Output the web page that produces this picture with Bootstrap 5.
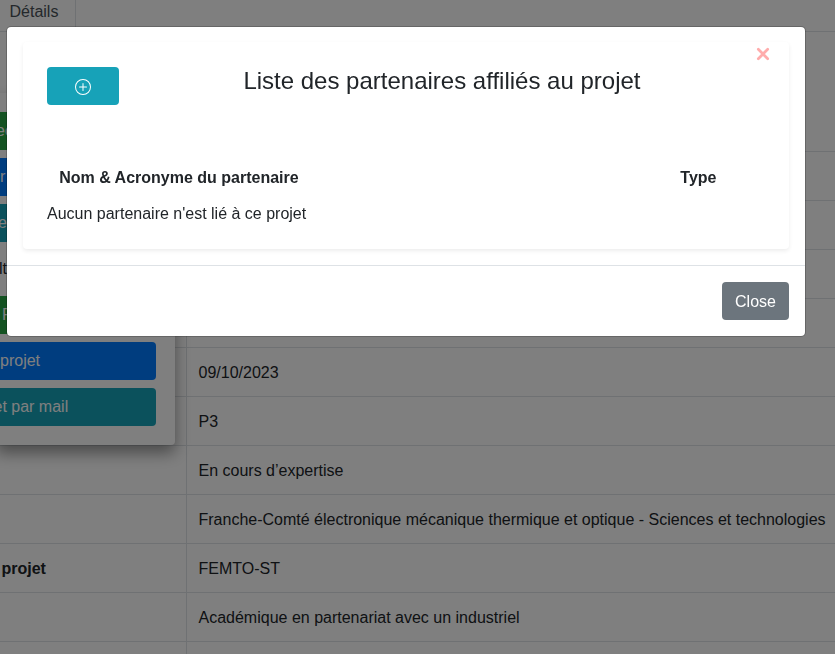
<!DOCTYPE html>
<html lang="fr">
<head>
<meta charset="utf-8">
<meta name="viewport" content="width=device-width, initial-scale=1">
<title>Partenaires du projet</title>
<link href="https://cdn.jsdelivr.net/npm/bootstrap@5.3.0/dist/css/bootstrap.min.css" rel="stylesheet">
<style>
body{font-family:"Liberation Sans",Arial,sans-serif;height:654px;overflow:hidden;--bs-body-line-height:1.5}
main{height:654px;overflow:hidden}
.tabs{height:31px}
.tab-details{width:76px;height:31px;padding:0 0 0 9.5px;border-right:1px solid #dee2e6;color:#495057;line-height:23px}
.project-table{display:grid;grid-template-columns:186px 1fr;grid-template-rows:120px repeat(10,49px) 13px}
.project-table>div{border-top:1px solid #dee2e6;padding:13px 0 0 12px;white-space:nowrap}
.project-table>div:nth-child(even){border-left:1px solid #dee2e6;padding-left:11.5px}
.project-table>div:nth-last-child(-n+2){padding-top:0}
.project-table>.cell-label{padding-left:1.5px}
.action-menu{left:-4px;top:93px;width:179px;height:352px;padding:19px 19px 19px 0;box-shadow:0 8px 16px rgba(0,0,0,.42);border-radius:4px}
.action-menu .btn{height:38px;padding:6px 0;border-radius:0 4px 4px 0;border:1px solid transparent;line-height:24px}
.bg-a{background:#28a745;color:#fff}.bg-b{background:#007bff;color:#fff}.bg-c,.bg-c:hover{background:#17a2b8;color:#fff}.bg-d{background:#fff;color:#212529}
.in-0{text-indent:-3.5px}.in-1{text-indent:-1px}.in-2{text-indent:1px}.in-3{text-indent:2px}.in-4{text-indent:3px}.in-5{text-indent:5px}
.shade{background:rgba(0,0,0,.5)}
.modal-dialog{width:800px;max-width:800px;margin:26px 0 0 6px}
.modal-content{border:1px solid rgba(0,0,0,.2);border-radius:5px}
.modal-body{padding:15px 16px 16px 16px}
.partners{height:207px;border:0;border-radius:4px;padding:25px 24px 0;box-shadow:0 2px 4px rgba(0,0,0,.075)}
.add-btn{width:72px;height:38px;padding:1px 0 0;border:0;border-radius:4px}
.heading{font-size:24px;line-height:28.8px;font-weight:400;margin-left:124.4px}
.dismiss{right:19px;top:5px;line-height:0}
.partner-head{margin-top:61px;height:24px}
.partner-name{padding-left:12.2px}
.partner-type{margin-right:48.5px}
.modal-footer{padding:16px;border-top:1px solid #dee2e6}
.close-btn{background:#6c757d;color:#fff;border-radius:4px;height:38px;width:67px;padding:2px 0 0}
</style>
<script src="https://cdn.jsdelivr.net/npm/bootstrap@5.3.0/dist/js/bootstrap.bundle.min.js"></script>
</head>
<body>
<main>
  <div class="tabs d-flex"><div class="tab-details">Détails</div></div>
  <div class="project-table">
    <div></div><div></div>
    <div></div><div></div>
    <div></div><div></div>
    <div></div><div></div>
    <div></div><div></div>
    <div></div><div>09/10/2023</div>
    <div></div><div>P3</div>
    <div></div><div>En cours d’expertise</div>
    <div></div><div>Franche-Comté électronique mécanique thermique et optique - Sciences et technologies</div>
    <div class="cell-label fw-bold">projet</div><div>FEMTO-ST</div>
    <div></div><div>Académique en partenariat avec un industriel</div>
    <div></div><div></div>
  </div>
  <div class="action-menu position-absolute bg-white d-flex flex-column gap-2">
    <div class="btn bg-a text-start in-1">ec</div>
    <div class="btn bg-b text-start in-4">r</div>
    <div class="btn bg-c text-start in-2">e</div>
    <div class="btn bg-d text-start in-3">lt</div>
    <div class="btn bg-a text-start in-5">F</div>
    <div class="btn bg-b text-start in-4">projet</div>
    <div class="btn bg-c text-start in-0">et par mail</div>
  </div>
</main>
<div class="modal d-block shade overflow-hidden" role="dialog">
  <div class="modal-dialog">
    <div class="modal-content">
      <div class="modal-body">
        <div class="card partners">
          <div class="d-flex align-items-start">
            <button class="btn add-btn bg-c d-flex align-items-center justify-content-center" aria-label="Ajouter">
              <svg width="16" height="16" viewBox="0 0 16 16" fill="#fff"><path d="M8 15A7 7 0 1 1 8 1a7 7 0 0 1 0 14zm0 1A8 8 0 1 0 8 0a8 8 0 0 0 0 16z"/><path d="M8 4a.5.5 0 0 1 .5.5v3h3a.5.5 0 0 1 0 1h-3v3a.5.5 0 0 1-1 0v-3h-3a.5.5 0 0 1 0-1h3v-3A.5.5 0 0 1 8 4z"/></svg>
            </button>
            <h4 class="heading mb-0">Liste des partenaires affiliés au projet</h4>
          </div>
          <div class="dismiss position-absolute">
            <svg width="14" height="14" viewBox="0 0 14 14" fill="none" stroke="#ffacac" stroke-width="2.7" stroke-linecap="round"><path d="M2.3 2.3l9.4 9.4M11.7 2.3l-9.4 9.4"/></svg>
          </div>
          <div class="partner-head d-flex fw-bold">
            <div class="partner-name flex-grow-1">Nom &amp; Acronyme du partenaire</div>
            <div class="partner-type">Type</div>
          </div>
          <div class="mt-2 pt-1">Aucun partenaire n'est lié à ce projet</div>
        </div>
      </div>
      <div class="modal-footer"><button class="btn close-btn m-0">Close</button></div>
    </div>
  </div>
</div>
</body>
</html>
